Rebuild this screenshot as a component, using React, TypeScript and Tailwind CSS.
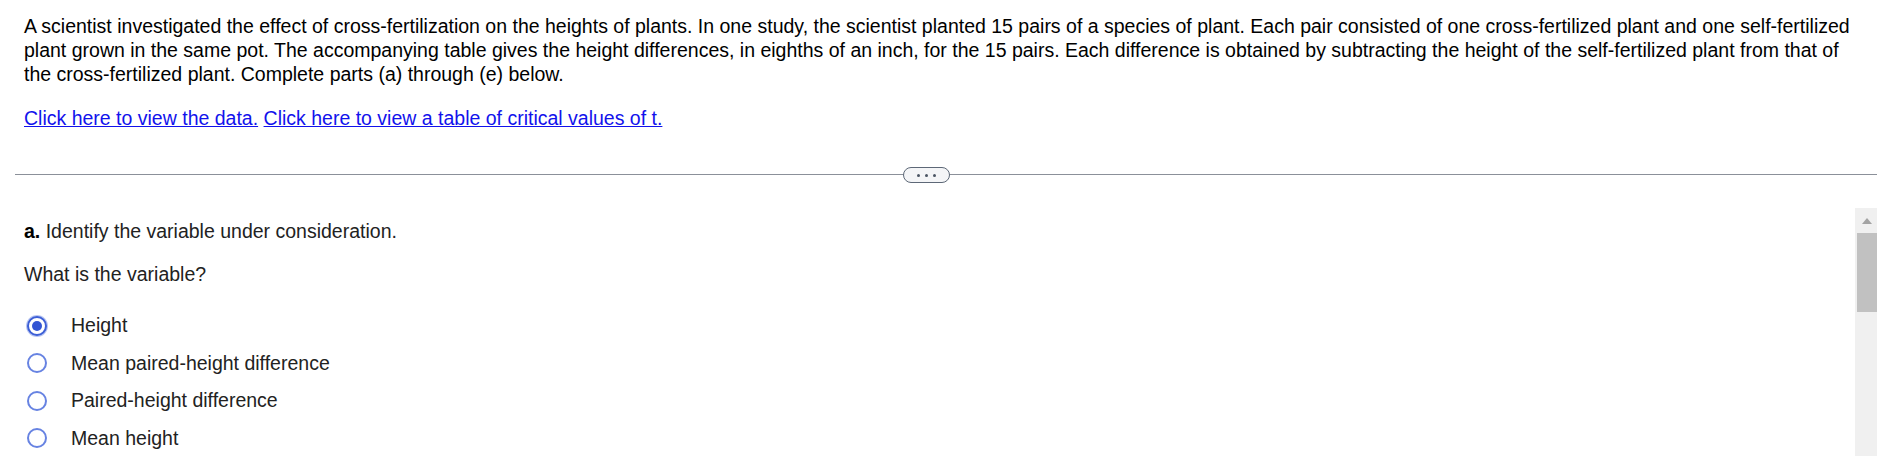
import React from "react";

const font = { fontFamily: '"Liberation Sans", Arial, sans-serif' };

function Radio({ checked }: { checked?: boolean }) {
  if (checked) {
    return (
      <span className="flex h-[20px] w-[20px] shrink-0 items-center justify-center rounded-full border-2 border-[#3d5fd6] bg-white shadow-[0_0_0_1px_#b9c6f2]">
        <span className="h-[10px] w-[10px] rounded-full bg-[#3355d4]" />
      </span>
    );
  }
  return <span className="h-[20px] w-[20px] shrink-0 rounded-full border-2 border-[#6783e2] bg-white" />;
}

const options = [
  { label: "Height", checked: true },
  { label: "Mean paired-height difference" },
  { label: "Paired-height difference" },
  { label: "Mean height" },
];

export default function App() {
  return (
    <div className="flex h-[456px] w-[1877px] flex-col overflow-hidden bg-white" style={font}>
      <div className="h-[2px] w-full bg-[#0f5f58]" />
      <div className="pl-[24px] pt-[14px] text-[19.5px] leading-[24px] text-black">
        <p>
          <span className="whitespace-nowrap">
            A scientist investigated the effect of cross-fertilization on the heights of plants. In one study, the scientist planted 15 pairs of a species of plant. Each pair consisted of one cross-fertilized plant and one self-fertilized
          </span>
          <br />
          <span className="whitespace-nowrap">
            plant grown in the same pot. The accompanying table gives the height differences, in eighths of an inch, for the 15 pairs. Each difference is obtained by subtracting the height of the self-fertilized plant from that of
          </span>
          <br />
          <span className="whitespace-nowrap">the cross-fertilized plant. Complete parts (a) through (e) below.</span>
        </p>
        <p className="mt-[20px] text-[#1212ec]">
          <a href="#" className="underline">Click here to view the data.</a>{" "}
          <a href="#" className="underline">Click here to view a table of critical values of t.</a>
        </p>
      </div>

      <div className="relative mt-[44px] ml-[15px] h-[1px] border-t border-[#8b9099]">
        <div className="absolute left-[888px] top-[-8px] flex h-[16px] w-[47px] items-center justify-center gap-[5px] rounded-full border-[1.5px] border-[#5d6877] bg-[#f4f5f7]">
          <span className="h-[3px] w-[3px] rounded-full bg-[#4b5563]" />
          <span className="h-[3px] w-[3px] rounded-full bg-[#4b5563]" />
          <span className="h-[3px] w-[3px] rounded-full bg-[#4b5563]" />
        </div>
      </div>

      <div className="mt-[33px] flex flex-1">
        <div className="flex-1 pl-[24px] pt-[12px] text-[19.5px] leading-[23px] text-[#222222]">
          <p>
            <span className="font-bold text-black">a.</span> Identify the variable under consideration.
          </p>
          <p className="mt-[20px]">What is the variable?</p>
          <div className="mt-[21px] flex flex-col">
            {options.map((o) => (
              <label key={o.label} className="flex h-[37.5px] items-center pl-[3px]">
                <Radio checked={o.checked} />
                <span className="ml-[24px]">{o.label}</span>
              </label>
            ))}
          </div>
        </div>
        <div className="flex w-[22px] flex-col bg-[#f0f0f0]">
          <div className="flex h-[25px] items-center justify-center pl-[2px]">
            <span className="h-0 w-0 border-x-[5px] border-b-[6px] border-x-transparent border-b-[#a3a3a3]" />
          </div>
          <div className="ml-[2px] h-[79px] bg-[#c1c1c1]" />
        </div>
      </div>
    </div>
  );
}
